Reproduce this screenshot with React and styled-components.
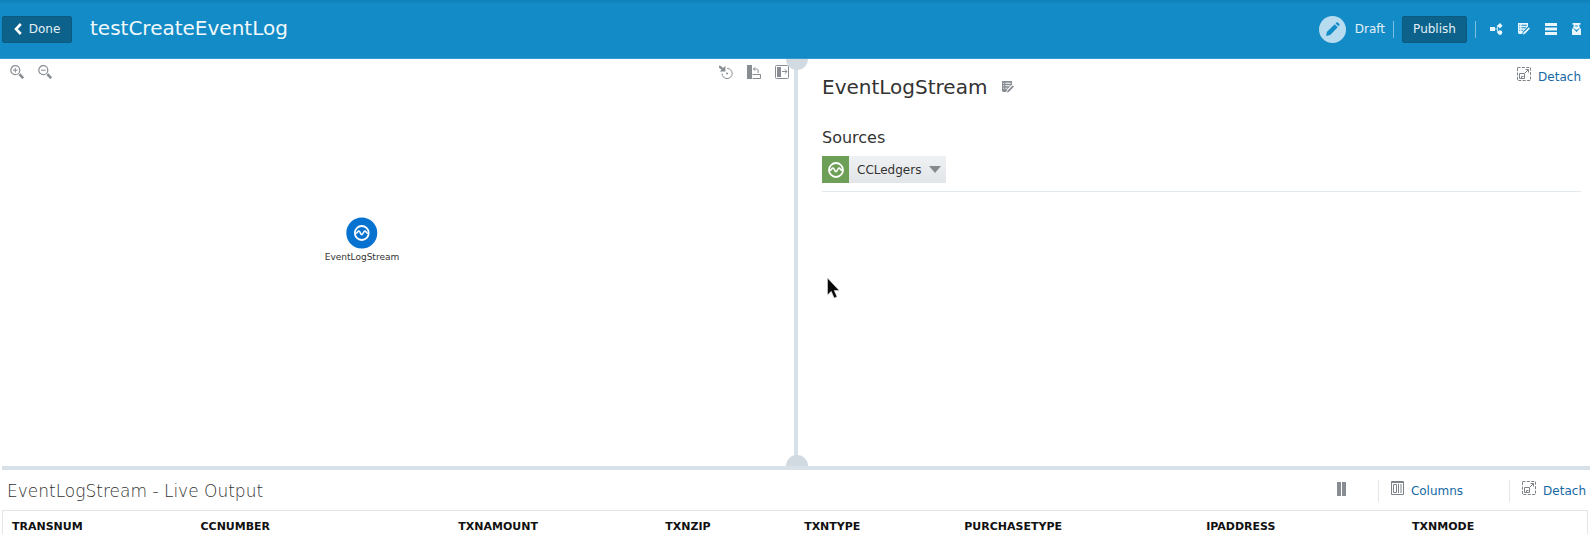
import React from "react";
import styled, { createGlobalStyle } from "styled-components";

const GlobalStyle = createGlobalStyle`
  * { box-sizing: border-box; }
  body {
    margin: 0;
    background: #fff;
    color: #333;
    font-family: "DejaVu Sans", Verdana, sans-serif;
    font-size: 12px;
  }
  button {
    font: inherit;
    color: inherit;
    border: 0;
    margin: 0;
    padding: 0;
    background: none;
    cursor: pointer;
  }
  svg { display: block; flex: none; }
  h1, h2, h3 { margin: 0; font-weight: 400; white-space: nowrap; }
`;

const Page = styled.div`
  display: flex;
  flex-direction: column;
  height: 100vh;
  overflow: hidden;
`;

const Header = styled.header`
  display: flex;
  align-items: center;
  flex: none;
  height: 59px;
  padding: 0 9px 0 2px;
  color: #f0f8fc;
  background: linear-gradient(#1080b7 0, #138bc6 4px);
  border-bottom: 1px solid #349bd0;
`;

const HeaderButton = styled.button`
  display: flex;
  align-items: center;
  justify-content: center;
  gap: 7px;
  width: ${(p) => p.$width};
  height: 27px;
  color: #e3f0f7;
  background: #0c628b;
  border: 1px solid #0d5a80;
  border-radius: 2px;
`;

const AppTitle = styled.h1`
  flex: 1;
  margin-left: 18px;
  padding-bottom: 2px;
  font-size: 20px;
  line-height: 28px;
`;

const Status = styled.div`
  display: flex;
  align-items: center;
  gap: 9px;
  color: #e3f0f7;
`;

const HeaderRule = styled.span`
  width: 1px;
  height: 17px;
  margin: 0 8px;
  background: #7dbfe0;
`;

const HeaderIcons = styled.nav`
  display: flex;
  gap: 15px;
  margin-left: 6px;
`;

const IconButton = styled.button`
  display: flex;
  color: ${(p) => p.$color || "#878d93"};
`;

const Workspace = styled.main`
  display: grid;
  grid-template-columns: minmax(0, 1fr) 4px minmax(0, 1fr);
  flex: 1;
  min-height: 0;
  padding-left: 2px;
`;

const Canvas = styled.section`
  position: relative;
  overflow: hidden;
`;

const Toolbar = styled.div`
  display: flex;
  justify-content: space-between;
  padding: 6px 5px 0 8px;
`;

const ToolGroup = styled.div`
  display: flex;
  gap: 14px;
`;

const StageNode = styled.button`
  position: absolute;
  left: 360px;
  top: 158px;
  display: flex;
  flex-direction: column;
  align-items: center;
  gap: 2px;
  font-size: 9px;
  line-height: 12px;
  transform: translateX(-50%);
`;

const Splitter = styled.div`
  position: relative;
  background: #d8e1e8;
`;

const Grip = styled.span`
  position: absolute;
  left: -8px;
  ${(p) => p.$edge}: 0;
  width: 22px;
  height: 11px;
  background: #d2dae1;
  border-radius: ${(p) => (p.$edge === "top" ? "0 0 11px 11px" : "11px 11px 0 0")};
`;

const Details = styled.section`
  position: relative;
  padding: 0 9px 0 24px;
`;

const DetailsHead = styled.div`
  display: flex;
  align-items: flex-start;
  justify-content: space-between;
  padding-top: 8px;
`;

const StageTitle = styled.div`
  display: flex;
  align-items: center;
  gap: 15px;
  margin-top: 6px;

  h2 {
    font-size: 20px;
    line-height: 28px;
  }
`;

const SourcesTitle = styled.h3`
  margin-top: 27px;
  font-size: 16px;
  line-height: 20px;
`;

const SourceRow = styled.div`
  padding: 8px 0;
  border-bottom: 1px solid #e1e8ee;
`;

const SourceButton = styled.button`
  display: flex;
  align-items: center;
  height: 27px;
  padding-right: 5px;
  background: linear-gradient(#eff1f3, #e2e5e8);
`;

const SourceBadge = styled.span`
  display: flex;
  align-items: center;
  justify-content: center;
  width: 27px;
  height: 27px;
  margin-right: 8px;
  background: #6d9f56;
`;

const Caret = styled.span`
  margin-left: 8px;
  border: solid transparent;
  border-width: 7px 6px 0;
  border-top-color: #858a8f;
`;

const ActionLink = styled.a`
  display: flex;
  align-items: center;
  gap: 7px;
  color: #1668a5;
  line-height: 18px;
  text-decoration: none;

  svg {
    color: #7d8388;
    margin-bottom: 6px;
  }
`;

const Pointer = styled.span`
  position: absolute;
  left: 29px;
  top: 218px;
  pointer-events: none;
`;

const Output = styled.section`
  flex: none;
  padding: 0 2px;
`;

const OutputHead = styled.div`
  display: flex;
  align-items: center;
  height: 44px;
  padding: 2px 4px 0 5px;
  margin: 0 -2px 0 0;
  border-top: 4px solid #d8e1e8;

  > button {
    margin-bottom: 4px;
  }
`;

const OutputTitle = styled.h2`
  flex: 1;
  font-size: 17px;
  font-weight: 200;
  line-height: 24px;
  color: #333;
`;

const OutputRule = styled.span`
  width: 1px;
  height: 22px;
  margin: 0 12px 0 ${(p) => p.$before};
  background: #e3e5e7;
`;

const OutputTable = styled.table`
  width: 100%;
  table-layout: fixed;
  border-collapse: separate;
  border-spacing: 0;
  border: 1px solid #e3e4e5;
  border-bottom: 0;
`;

const Column = styled.th`
  width: ${(p) => p.$width};
  height: 23px;
  padding: 8px 0 0 9px;
  font-size: 11px;
  line-height: 14px;
  font-weight: 700;
  text-align: left;
  color: #111;
`;

const COLUMNS = [
  ["TRANSNUM", "11.9%"],
  ["CCNUMBER", "16.28%"],
  ["TXNAMOUNT", "13.06%"],
  ["TXNZIP", "8.77%"],
  ["TXNTYPE", "10.11%"],
  ["PURCHASETYPE", "15.27%"],
  ["IPADDRESS", "13%"],
  ["TXNMODE", "auto"],
];

const Magnifier = ({ plus }) => (
  <svg width="14" height="14" viewBox="0 0 14 14" fill="none" stroke="currentColor">
    <circle cx="5.3" cy="5.2" r="4.5" strokeWidth="1.2" />
    <path d="M3 5.2h4.600" />
    {plus && <path d="M5.3 2.900v4.600" />}
    <path d="M8.7 8.7l1 1" />
    <path d="M9.4 9.2l3.8 4" strokeWidth="2.6" />
  </svg>
);

const AutoLayoutIcon = () => (
  <svg width="14" height="14" viewBox="0 0 14 14" fill="none" stroke="currentColor">
    <path d="M8.2 3.4A5.1 5.1 0 1 1 3 8.5" />
    <circle cx="8" cy="8.5" r="1" fill="currentColor" stroke="none" />
    <path d="M0 1.2L4.4 4.6" strokeWidth="2.4" />
    <path d="M6.4.8v5.600H.8z" fill="currentColor" stroke="none" />
  </svg>
);

const RotateLayoutIcon = () => (
  <svg width="14" height="14" viewBox="0 0 14 14" fill="none" stroke="currentColor">
    <path d="M0 0h5v14H0z" fill="currentColor" stroke="none" />
    <path d="M5.5 9.5h8v4h-8M6.5 4h3.2c1 0 1.4.5 1.4 1.5V8M8 2.3L6.4 4 8 5.7" />
  </svg>
);

const CollapseIcon = () => (
  <svg width="14" height="14" viewBox="0 0 14 14" fill="none" stroke="currentColor">
    <rect x=".5" y=".5" width="13" height="13" rx="1" />
    <path d="M2 2h4v10H2z" fill="currentColor" stroke="none" />
    <path d="M7 6.500h5M9.8 4.300L12 6.500 9.8 8.700" />
  </svg>
);

const StreamIcon = ({ size, x, y }) => (
  <svg x={x} y={y} width={size} height={size} viewBox="0 0 16 16" fill="none" stroke="#fff">
    <circle cx="8" cy="8" r="7" strokeWidth="1.8" />
    <path d="M1.8 8.2C3.6 8.6 3.6 6 5 6s1.6 3.7 3 3.7S9.7 6 11 6s1.4 2.6 3.2 2.2" strokeWidth="1.6" />
  </svg>
);

const NodeDisc = () => (
  <svg width="32" height="32" viewBox="0 0 32 32">
    <circle cx="16" cy="16" r="15.5" fill="#0872d0" />
    <StreamIcon x={8} y={8} size={16} />
  </svg>
);

const DraftIcon = () => (
  <svg width="27" height="27" viewBox="0 0 27 27">
    <circle cx="13.5" cy="13.5" r="13.5" fill="#b8dcef" />
    <path d="M7 20l1-4.2 7.7-7.6 3 3-7.5 7.7zM16.6 7.4l.9-.8c.7-.5 1.2-.3 2.2.7s1.1 1.5.4 2.2l-.7.8z" fill="#138bc6" />
  </svg>
);

const ChevronIcon = () => (
  <svg width="8" height="12" viewBox="0 0 8 12" fill="none" stroke="#fff" strokeWidth="2.600">
    <path d="M6.800 1L2 6l4.800 5" />
  </svg>
);

const TopologyIcon = () => (
  <svg width="13" height="12" viewBox="0 0 13 12" fill="currentColor">
    <path d="M0 4h5v4H0zM9.900 0l2.700 2.700-2.700 2.700-2.700-2.700z" />
    <circle cx="10" cy="9.600" r="2.300" />
    <path d="M5 6h2.500M8.500 2.700H7.400v6.900h1.100" fill="none" stroke="currentColor" strokeWidth=".8" />
  </svg>
);

const EditListIcon = () => (
  <svg width="12" height="12" viewBox="0 0 12 12" fill="currentColor">
    <path fillRule="evenodd" d="M0 0h10v3.600L5 8.600 4.200 11H1L0 10zM1.200 1.7v1h1v-1zm2.2 0v1h5.400v-1zM1.200 4.2v1h1v-1zm2.2 0v1h4.200l1-1zM1.200 6.8v1h1v-1zm2.2 0v1h1.200l1-1z" />
    <path d="M10.600 4.400l1.400 1.200-5 5.200-2 1 .6-2.200z" />
  </svg>
);

const StackIcon = () => (
  <svg width="12" height="12" viewBox="0 0 12 12" fill="currentColor">
    <path d="M0 0h12v3H0zM0 4.5h12v3H0zM0 9h12v3H0z" />
  </svg>
);

const ArchiveIcon = () => (
  <svg width="9" height="12" viewBox="0 0 9 12" fill="currentColor">
    <path d="M.5 0h8v1.8H7L8 5l-3.5 2L1 5l1-3.2H.5zM3.2 2.5h2.6v1H3.2z" fillRule="evenodd" />
    <path d="M0 5.5h1.5L4.5 9l3-3.500H9V12H0z" />
  </svg>
);

const DetachIcon = () => (
  <svg width="14" height="14" viewBox="0 0 14 14" fill="none" stroke="currentColor">
    <rect x=".5" y=".5" width="13" height="13" strokeDasharray="3 1.4" />
    <path d="M2.500 6.500h5v5h-5zM4.500 11V9.500h2M8 6l3-3M8.500 2.500h3v3" />
  </svg>
);

const ColumnsIcon = () => (
  <svg width="13" height="14" viewBox="0 0 13 14" fill="none" stroke="currentColor">
    <path d="M.5.5h12v13H.5zM0 1.500h13M2.500 3.500h3v8h-3zM7.500 3v9M10 3v9" />
  </svg>
);

const PauseIcon = () => (
  <svg width="9" height="14" viewBox="0 0 9 14" fill="currentColor">
    <path d="M0 0h4v14H0zM5 0h4v14H5z" />
  </svg>
);

const ArrowCursor = () => (
  <svg width="13" height="22" viewBox="0 0 13 22">
    <path d="M.5 1v17l3.700-3.700 3 6.700 2.800-1.300-2.800-6.200h5z" fill="#080808" stroke="#ddd" strokeWidth=".6" />
  </svg>
);

export default function App() {
  return (
    <Page>
      <GlobalStyle />
      <Header>
        <HeaderButton $width="70px"><ChevronIcon />Done</HeaderButton>
        <AppTitle>testCreateEventLog</AppTitle>
        <Status><DraftIcon />Draft</Status>
        <HeaderRule />
        <HeaderButton $width="65px">Publish</HeaderButton>
        <HeaderRule />
        <HeaderIcons>
          <IconButton $color="#e9f6fd" aria-label="Topology"><TopologyIcon /></IconButton>
          <IconButton $color="#e9f6fd" aria-label="Edit"><EditListIcon /></IconButton>
          <IconButton $color="#e9f6fd" aria-label="Live output"><StackIcon /></IconButton>
          <IconButton $color="#e9f6fd" aria-label="Archive"><ArchiveIcon /></IconButton>
        </HeaderIcons>
      </Header>

      <Workspace>
        <Canvas>
          <Toolbar>
            <ToolGroup>
              <IconButton aria-label="Zoom in"><Magnifier plus /></IconButton>
              <IconButton aria-label="Zoom out"><Magnifier /></IconButton>
            </ToolGroup>
            <ToolGroup>
              <IconButton aria-label="Reset layout"><AutoLayoutIcon /></IconButton>
              <IconButton aria-label="Rotate layout"><RotateLayoutIcon /></IconButton>
              <IconButton aria-label="Collapse panel"><CollapseIcon /></IconButton>
            </ToolGroup>
          </Toolbar>
          <StageNode><NodeDisc />EventLogStream</StageNode>
        </Canvas>
        <Splitter>
          <Grip $edge="top" />
          <Grip $edge="bottom" />
        </Splitter>
        <Details>
          <DetailsHead>
            <StageTitle>
              <h2>EventLogStream</h2>
              <IconButton aria-label="Edit stage"><EditListIcon /></IconButton>
            </StageTitle>
            <ActionLink href="#detach"><DetachIcon />Detach</ActionLink>
          </DetailsHead>
          <SourcesTitle>Sources</SourcesTitle>
          <SourceRow>
            <SourceButton>
              <SourceBadge><StreamIcon size={16} /></SourceBadge>
              CCLedgers
              <Caret />
            </SourceButton>
          </SourceRow>
          <Pointer><ArrowCursor /></Pointer>
        </Details>
      </Workspace>

      <Output>
        <OutputHead>
          <OutputTitle>EventLogStream - Live Output</OutputTitle>
          <IconButton aria-label="Pause"><PauseIcon /></IconButton>
          <OutputRule $before="32px" />
          <ActionLink href="#columns"><ColumnsIcon />Columns</ActionLink>
          <OutputRule $before="46px" />
          <ActionLink href="#detach-output"><DetachIcon />Detach</ActionLink>
        </OutputHead>
        <OutputTable>
          <thead>
            <tr>
              {COLUMNS.map(([name, width]) => (
                <Column key={name} $width={width} scope="col">{name}</Column>
              ))}
            </tr>
          </thead>
        </OutputTable>
      </Output>
    </Page>
  );
}
